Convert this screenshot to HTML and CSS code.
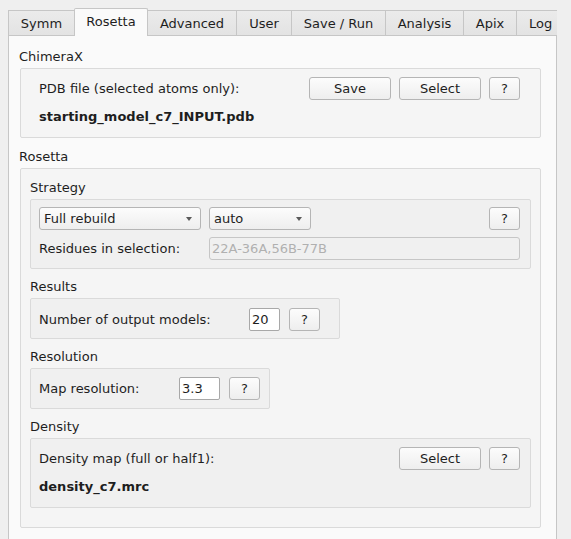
FILE: index.html
```html
<!DOCTYPE html>
<html>
<head>
<meta charset="utf-8">
<link rel="stylesheet" href="styles.css">
</head>
<body>
<div class="window">
  <div class="tabbar">
    <div class="tab tab-first w-symm">Symm</div>
    <div class="tab tab-selected w-rosetta">Rosetta</div>
    <div class="tab w-advanced">Advanced</div>
    <div class="tab w-user">User</div>
    <div class="tab w-saverun">Save / Run</div>
    <div class="tab w-analysis">Analysis</div>
    <div class="tab w-apix">Apix</div>
    <div class="tab tab-last">Log</div>
  </div>
  <div class="pane">
    <div class="title title-first">ChimeraX</div>
    <div class="box box-l1 box-chimerax">
      <div class="row">
        <span class="label grow">PDB file (selected atoms only):</span>
        <button class="btn btn-wide">Save</button>
        <button class="btn btn-wide">Select</button>
        <button class="btn btn-help">?</button>
      </div>
      <div class="filename fn-chimerax">starting_model_c7_INPUT.pdb</div>
    </div>

    <div class="title title-rosetta">Rosetta</div>
    <div class="box box-l1 box-rosetta">
      <div class="title title-strategy">Strategy</div>
      <div class="box box-l2 box-strategy">
        <div class="row">
          <div class="combo combo-mode"><span>Full rebuild</span><span class="arrow"></span></div>
          <div class="combo combo-auto"><span>auto</span><span class="arrow"></span></div>
          <span class="grow"></span>
          <button class="btn btn-help">?</button>
        </div>
        <div class="row row-residues">
          <span class="label label-res">Residues in selection:</span>
          <div class="field field-disabled grow">22A-36A,56B-77B</div>
        </div>
      </div>

      <div class="title title-sub">Results</div>
      <div class="box box-l2 box-small box-results">
        <div class="row">
          <span class="label label-models">Number of output models:</span>
          <div class="field field-models">20</div>
          <button class="btn btn-help">?</button>
        </div>
      </div>

      <div class="title title-sub">Resolution</div>
      <div class="box box-l2 box-small box-resolution">
        <div class="row">
          <span class="label label-resol">Map resolution:</span>
          <div class="field field-resol">3.3</div>
          <button class="btn btn-help">?</button>
        </div>
      </div>

      <div class="title title-sub">Density</div>
      <div class="box box-l2 box-density">
        <div class="row">
          <span class="label grow">Density map (full or half1):</span>
          <button class="btn btn-wide">Select</button>
          <button class="btn btn-help">?</button>
        </div>
        <div class="filename fn-density">density_c7.mrc</div>
      </div>
    </div>
  </div>
</div>
</body>
</html>
```

FILE: styles.css
```css
* { box-sizing: border-box; }

html, body {
  margin: 0;
  padding: 0;
  background: #efefef;
  height: 100%;
  overflow: hidden;
}

body {
  font-family: "DejaVu Sans", "Noto Sans", sans-serif;
  font-size: 13px;
  color: #1e1e1e;
}

.window {
  padding: 8px 0 0 8px;
}

/* ---------- tabs ---------- */
.tabbar {
  display: flex;
  align-items: flex-start;
  width: 549px;
  height: 28px;
  position: relative;
  z-index: 2;
  overflow: hidden;
}

.tab {
  flex: none;
  height: 25px;
  margin-top: 2px;
  border-top: 1px solid #c6c6c6;
  border-left: 1px solid #c6c6c6;
  background: linear-gradient(#ebebeb, #e3e3e3);
  display: flex;
  align-items: center;
  justify-content: center;
  line-height: 16px;
  padding-top: 1px;
  white-space: nowrap;
}

.tab-selected {
  height: 28px;
  margin-top: 0;
  border-right: 1px solid #c6c6c6;
  background: #fafafa;
  border-radius: 2px 2px 0 0;
  padding-top: 0;
  padding-bottom: 2px;
}

.tab-selected + .tab { border-left: none; }

.w-symm { width: 66px; }
.w-rosetta { width: 74px; }
.w-advanced { width: 88px; }
.w-user { width: 55px; }
.w-saverun { width: 94px; }
.w-analysis { width: 78px; }
.w-apix { width: 53px; }
.tab-last {
  flex: 1;
  justify-content: flex-start;
  padding-left: 12px;
}

/* ---------- pane ---------- */
.pane {
  width: 549px;
  height: 504px;
  margin-top: -1px;
  border: 1px solid #c6c6c6;
  border-bottom: none;
  background: #fafafa;
  padding: 13px 15px 0 11px;
}

.title {
  line-height: 16px;
  height: 16px;
  margin-left: -1px;
  margin-bottom: 3px;
}

.title-rosetta { margin-top: 11px; }
.title-strategy { margin-top: 11px; margin-left: 0; }
.title-sub { margin-top: 10px; margin-left: 0; }

.box {
  border: 1px solid #dadada;
  border-radius: 2px;
}

.box-l1 { background: #f5f5f5; }
.box-l2 { background: #f0f0f0; }

.box-chimerax {
  height: 70px;
  padding: 8px 20px 0 18px;
}

.box-rosetta {
  padding: 0 9px 19px 9px;
}

.box-strategy {
  height: 70px;
  padding: 7px 10px 0 8px;
}

.box-small {
  width: fit-content;
  height: 41px;
}
.box-results { padding: 9px 19px 0 8px; }
.box-resolution { padding: 8px 9px 0 8px; }

.box-density {
  height: 70px;
  padding: 8px 10px 0 8px;
}

.row {
  display: flex;
  align-items: center;
  height: 23px;
  gap: 8px;
}

.row-residues { margin-top: 7px; gap: 0; }

.grow { flex: 1; }

.label { white-space: nowrap; }
.label-res { width: 170px; }
.label-models { width: 210px; }
.label-resol { width: 140px; }

.box-results .row, .box-resolution .row { gap: 0; }
.box-results .btn-help, .box-resolution .btn-help { margin-left: 9px; }

.filename {
  font-weight: bold;
  line-height: 16px;
  height: 16px;
  margin-top: 9px;
}

/* ---------- controls ---------- */
.btn {
  font-family: inherit;
  font-size: 13px;
  color: #1e1e1e;
  height: 23px;
  margin: 0;
  padding: 0;
  border: 1px solid #b5b5b5;
  border-radius: 3px;
  background: linear-gradient(#fcfcfc, #eeeeee);
  flex: none;
}

.btn-wide { width: 82px; }
.btn-help { width: 31px; }

.combo {
  height: 23px;
  border: 1px solid #b5b5b5;
  border-radius: 3px;
  background: linear-gradient(#fcfcfc, #eeeeee);
  display: flex;
  align-items: center;
  justify-content: space-between;
  padding: 0 8px 0 4px;
  flex: none;
}

.combo-mode { width: 162px; }
.combo-auto { width: 102px; }

.arrow {
  width: 0;
  height: 0;
  border-left: 3.5px solid transparent;
  border-right: 3.5px solid transparent;
  border-top: 4px solid #5a5a5a;
}

.field {
  height: 23px;
  border: 1px solid #a8a8a8;
  border-radius: 2px;
  background: #ffffff;
  display: flex;
  align-items: center;
  padding: 0 2px;
  flex: none;
}

.field-disabled {
  flex: 1;
  background: #f0f0f0;
  border-color: #c6c6c6;
  color: #b0b0b0;
  border-radius: 3px;
}

.field-models { width: 31px; }
.field-resol { width: 41px; }
```
